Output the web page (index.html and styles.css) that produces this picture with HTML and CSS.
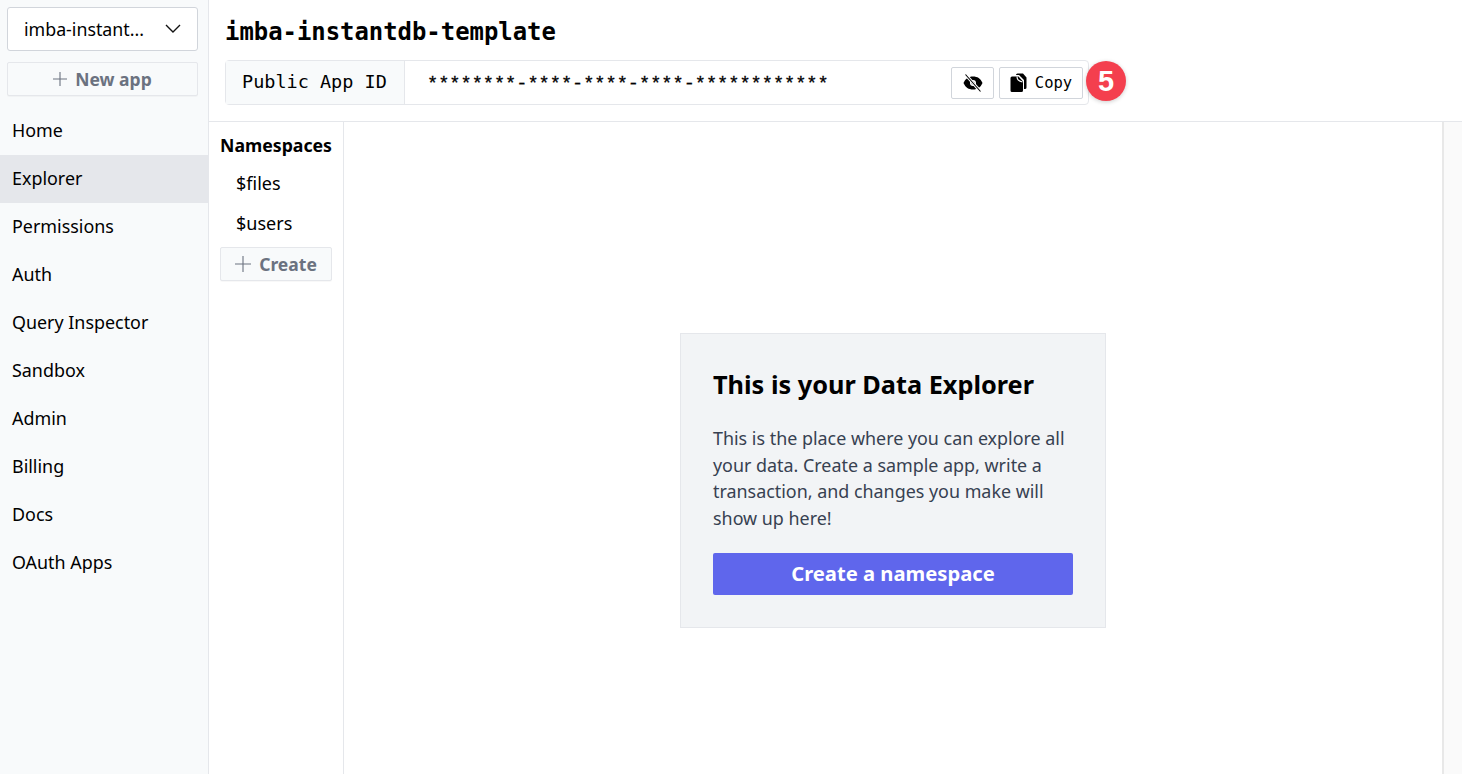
FILE: index.html
```html
<!DOCTYPE html>
<html lang="en">
<head>
    <meta charset="UTF-8">
    <title>imba-instantdb-template</title>
    <link rel="stylesheet" href="styles.css">
</head>
<body>
    <div class="app">
        <aside class="sidebar">
            <div class="sidebar-top">
                <div class="app-select">
                    <span class="app-select-name">imba-instant...</span>
                    <svg class="chevron" viewBox="0 0 16 10" width="16" height="10"><path d="M1 1l7 7 7-7" fill="none" stroke="#111" stroke-width="1.4"/></svg>
                </div>
                <button class="ghost-button">
                    <svg viewBox="0 0 14 14" width="14" height="14"><path d="M7 0v14M0 7h14" stroke="#6b7280" stroke-width="1.1"/></svg>
                    New app
                </button>
            </div>
            <nav class="nav">
                <a class="nav-item">Home</a>
                <a class="nav-item active">Explorer</a>
                <a class="nav-item">Permissions</a>
                <a class="nav-item">Auth</a>
                <a class="nav-item">Query Inspector</a>
                <a class="nav-item">Sandbox</a>
                <a class="nav-item">Admin</a>
                <a class="nav-item">Billing</a>
                <a class="nav-item">Docs</a>
                <a class="nav-item">OAuth Apps</a>
            </nav>
        </aside>
        <div class="main">
            <header class="header">
                <h1 class="title">imba-instantdb-template</h1>
                <div class="id-row">
                    <div class="id-label">Public App ID</div>
                    <div class="id-value">********-****-****-****-************</div>
                    <button class="icon-button hide-button">
                        <svg viewBox="0 0 20 20" width="20" height="20">
                            <path d="M0.500 10c2-4.500 5-6.500 9.500-6.500s7.500 2 9.500 6.500c-2 4.500-5 6.500-9.500 6.500s-7.500-2-9.500-6.500z" fill="#000"/>
                            <circle cx="10" cy="10" r="3" fill="#fff"/>
                            <circle cx="10" cy="10" r="1.600" fill="#000"/>
                            <path d="M2.500 1.500l15 17" stroke="#fff" stroke-width="3"/>
                            <path d="M2.500 1.500l15 17" stroke="#000" stroke-width="1.100"/>
                        </svg>
                    </button>
                    <button class="icon-button copy-button">
                        <svg viewBox="0 0 17 20" width="17" height="20">
                            <path d="M7.500 0.500h5.500l3.500 4v10a1.500 1.500 0 0 1-1.500 1.500h-1V7L9 2H6V2a1.500 1.500 0 0 1 1.500-1.500z" fill="#000"/>
                            <path d="M2 3.500h6.500L13 8.500v9A1.500 1.500 0 0 1 11.500 19H2A1.500 1.500 0 0 1 0.500 17.500V5A1.500 1.500 0 0 1 2 3.500z" fill="#000"/>
                            <path d="M7 3.500c0 3 1 4.500 5.500 5.500" fill="none" stroke="#fff" stroke-width="1.200"/>
                        </svg>
                        Copy
                    </button>
                    <div class="badge">5</div>
                </div>
            </header>
            <div class="content">
                <div class="namespaces">
                    <h2 class="ns-title">Namespaces</h2>
                    <a class="ns-item">$files</a>
                    <a class="ns-item">$users</a>
                    <button class="ghost-button">
                        <svg viewBox="0 0 16 16" width="16" height="16"><path d="M8 0v16M0 8h16" stroke="#6b7280" stroke-width="1.1"/></svg>
                        Create
                    </button>
                </div>
                <div class="explorer">
                    <div class="card">
                        <h3 class="card-title">This is your Data Explorer</h3>
                        <p class="card-text">This is the place where you can explore all your data. Create a sample app, write a transaction, and changes you make will show up here!</p>
                        <button class="primary-button">Create a namespace</button>
                    </div>
                </div>
                <div class="right-strip"></div>
            </div>
        </div>
    </div>
</body>
</html>
```

FILE: styles.css
```css
* {
    box-sizing: border-box;
}
html, body {
    height: 100%;
}
body {
    margin: 0;
    font-family: "Noto Sans", "Open Sans", sans-serif;
    color: #000;
    background: #fff;
    overflow: hidden;
}
button {
    font-family: inherit;
    cursor: pointer;
}
.app {
    display: flex;
    height: 774px;
}
.sidebar {
    width: 209px;
    flex-shrink: 0;
    background: #f8fafb;
    border-right: 1px solid #e5e7eb;
}
.sidebar-top {
    display: flex;
    flex-direction: column;
    gap: 11px;
    padding: 7px 10px 11px 7px;
}
.app-select {
    display: flex;
    align-items: center;
    justify-content: space-between;
    height: 44px;
    padding: 0 16px;
    background: #fff;
    border: 1px solid #d1d5db;
    border-radius: 3px;
    font-size: 17.800px;
}
.ghost-button {
    display: flex;
    align-items: center;
    justify-content: center;
    gap: 8px;
    height: 34px;
    width: 100%;
    background: #f8fafb;
    border: 1px solid #e5e7eb;
    border-radius: 2px;
    color: #6b7280;
    font-size: 17.500px;
    font-weight: 700;
    box-shadow: 0 1px 1px rgba(0, 0, 0, 0.03);
}
.nav-item {
    display: flex;
    align-items: center;
    height: 48px;
    padding: 0 0 2px 12px;
    font-size: 17.900px;
}
.nav-item.active {
    background: #e5e7eb;
}
.main {
    flex: 1;
    display: flex;
    flex-direction: column;
    min-width: 0;
}
.header {
    height: 122px;
    padding: 17px 0 0 16px;
    border-bottom: 1px solid #e5e7eb;
}
.title {
    margin: 0 0 13px;
    height: 30px;
    font-family: "DejaVu Sans Mono", "Liberation Mono", monospace;
    font-size: 23.900px;
    line-height: 30px;
    font-weight: 700;
}
.id-row {
    position: relative;
    display: flex;
    align-items: center;
    width: 864px;
    height: 45px;
    border: 1px solid #e5e7eb;
    border-radius: 4px;
    font-family: "DejaVu Sans Mono", "Liberation Mono", monospace;
}
.id-label {
    display: flex;
    align-items: center;
    height: 100%;
    padding: 0 16px 2px;
    width: 179px;
    background: #f8fafb;
    border-right: 1px solid #e5e7eb;
    font-size: 18.500px;
}
.id-value {
    flex: 1;
    padding: 3px 0 0 22px;
    font-family: "Liberation Mono", monospace;
    font-size: 18.600px;
    -webkit-text-stroke: 0.3px #000;
}
.icon-button {
    display: flex;
    align-items: center;
    justify-content: center;
    height: 32px;
    background: #fff;
    border: 1px solid #d1d5db;
    border-radius: 2px;
    padding: 0;
    font-family: inherit;
    font-size: 15.500px;
    color: #000;
}
.hide-button {
    width: 43px;
    margin-right: 5px;
}
.copy-button {
    width: 84px;
    gap: 8px;
    margin-right: 5px;
}
.badge {
    position: absolute;
    left: 860px;
    top: 0;
    width: 40px;
    height: 40px;
    display: flex;
    align-items: center;
    justify-content: center;
    border-radius: 50%;
    background: #f43f4e;
    color: #fff;
    font-family: "Liberation Sans", sans-serif;
    font-size: 29px;
    font-weight: 700;
    box-shadow: 0 1px 4px rgba(0, 0, 0, 0.2);
}
.content {
    flex: 1;
    display: flex;
    min-height: 0;
}
.namespaces {
    width: 135px;
    flex-shrink: 0;
    padding: 0 11px;
    border-right: 1px solid #e5e7eb;
}
.ns-title {
    margin: 0;
    height: 42px;
    line-height: 47px;
    font-size: 17.700px;
    font-weight: 700;
    white-space: nowrap;
}
.ns-item {
    display: flex;
    align-items: center;
    height: 40px;
    padding: 0 0 2px 16px;
    font-size: 18px;
}
.namespaces .ghost-button {
    margin-top: 3px;
}
.explorer {
    flex: 1;
    display: flex;
    justify-content: center;
    padding-top: 211px;
}
.card {
    width: 426px;
    height: 295px;
    padding: 31px 32px 32px;
    background: #f2f4f6;
    border: 1px solid #e5e7eb;
}
.card-title {
    margin: 0 0 22px;
    font-size: 25.300px;
    line-height: 38px;
    font-weight: 700;
}
.card-text {
    margin: 0 0 22px;
    font-size: 17.900px;
    line-height: 26.500px;
    color: #374151;
}
.primary-button {
    display: block;
    width: 100%;
    height: 42px;
    padding: 0 0 2px;
    border: 0;
    border-radius: 2px;
    background: #5f66ec;
    color: #fff;
    font-size: 20.200px;
    font-weight: 700;
}
.right-strip {
    width: 20px;
    flex-shrink: 0;
    background: #fafafa;
    border-left: 2px solid #e8e8e8;
}
```
